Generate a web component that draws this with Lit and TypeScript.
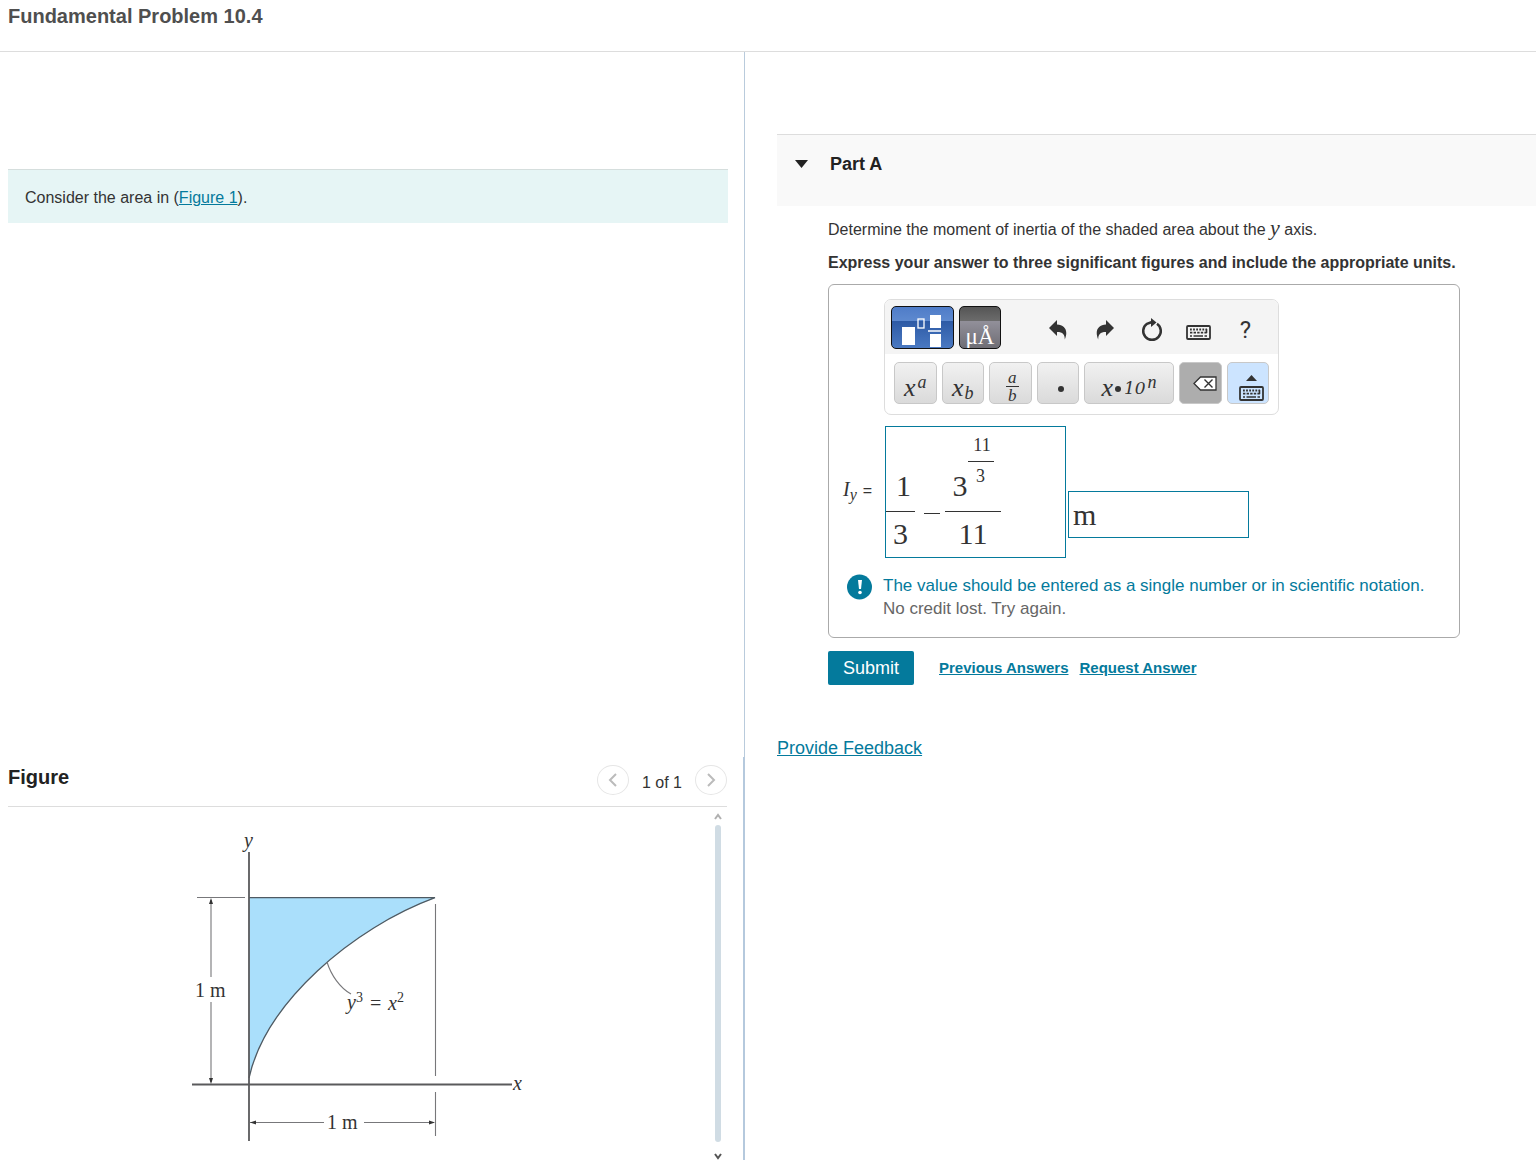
import { LitElement, html, css, svg } from "lit";
import { customElement, property } from "lit/decorators.js";

const keyboardShape = svg`
  <rect x="1" y="1" width="23" height="13" rx="1" fill="none" stroke="currentColor" stroke-width="1.8" />
  <path d="M4 4.5h17" fill="none" stroke="currentColor" stroke-width="1.8" stroke-dasharray="1.8 1.3" />
  <path d="M4 7.6h17" fill="none" stroke="currentColor" stroke-width="1.8" stroke-dasharray="2.4 1.2" />
  <path d="M4 11h2M7.5 11h9.5M18.5 11h2.5M20.5 4v4" fill="none" stroke="currentColor" stroke-width="1.6" />
`;

@customElement("math-toolbar")
export class MathToolbar extends LitElement {
  static styles = css`
    :host {
      display: block;
      box-sizing: border-box;
      width: 395px;
      max-width: 100%;
      border: 1px solid #ddd;
      border-radius: 7px;
      background: #fff;
      overflow: hidden;
      color: #333;
    }
    button {
      box-sizing: border-box;
      margin: 0;
      padding: 0;
      border: 0;
      background: none;
      color: inherit;
      font: inherit;
      cursor: pointer;
    }
    svg {
      display: block;
    }
    .top {
      display: flex;
      align-items: center;
      height: 54px;
      padding: 0 6px;
      background: #f4f4f4;
    }
    .tab {
      display: flex;
      height: 43px;
      border: 1px solid #111;
      border-radius: 5px;
      color: #fff;
      overflow: hidden;
    }
    .templates {
      width: 63px;
      background: linear-gradient(#4f7cc8 0, #5d89cf 33%, #2d5aa5 34%, #4a79c2 100%);
    }
    .symbols {
      width: 42px;
      margin-left: 5px;
      justify-content: center;
      align-items: flex-end;
      background: linear-gradient(#555 0, #6b6b6b 33%, #92909a 34%, #6f6e75 100%);
      font: 23px/22px "Liberation Serif", serif;
    }
    .tools {
      display: flex;
      margin-left: 33px;
    }
    .tool {
      display: flex;
      width: 47px;
      height: 43px;
      padding-top: 6px;
      align-items: center;
      justify-content: center;
    }
    .help {
      font: 24px/36px Roboto, sans-serif;
    }
    .keys {
      display: grid;
      grid-template-columns: repeat(4, 1fr) 90px repeat(2, 1fr);
      gap: 5px;
      padding: 8px 9px 10px;
    }
    .key {
      display: flex;
      height: 42px;
      align-items: center;
      justify-content: center;
      border: 1px solid #c8c8c8;
      border-radius: 5px;
      background: linear-gradient(#f1f1f1, #dadada);
      font: italic 26px/26px "Liberation Serif", serif;
    }
    .script {
      font-size: 18px;
      line-height: 18px;
    }
    .raised {
      align-self: flex-start;
      margin: 10px 0 0 2px;
    }
    .lowered {
      align-self: flex-end;
      margin: 0 0 1px 1px;
    }
    .variable {
      padding-top: 10px;
    }
    .ratio {
      display: grid;
      margin: 6px 0 0 4px;
      font-size: 17px;
      line-height: 17px;
    }
    .over {
      width: 13px;
      border-bottom: 1px solid #333;
      text-align: center;
    }
    .under {
      text-align: center;
    }
    .dot {
      width: 6px;
      height: 6px;
      border-radius: 50%;
      background: #333;
    }
    .solo {
      margin: 12px 0 0 7px;
    }
    .inner {
      margin: 12px 3px 0 2px;
    }
    .ten {
      padding-top: 10px;
      font: italic 17px/20px "DejaVu Serif", serif;
    }
    .erase {
      background: #adadad;
      padding-left: 10px;
    }
    .toggle {
      background: #cce4ff;
      padding: 9px 0 0 8px;
    }
  `;

  render() {
    return html`
      <div class="top">
        <button class="tab templates" aria-label="Templates">
          <svg width="61" height="41" viewBox="0 0 61 41">
            <path d="M10 20h13v18h-13zM38 8h11v13h-11zM38 27h11v13h-11z" fill="#fff" />
            <rect x="26" y="12" width="6" height="9" fill="none" stroke="#fff" stroke-width="1.3" />
            <path d="M36 24h13" stroke="#fff" stroke-width="1.4" />
          </svg>
        </button>
        <button class="tab symbols" aria-label="Symbols">μÅ</button>
        <div class="tools">
          <button class="tool" aria-label="Undo">
            <svg width="18" height="20" viewBox="0 0 18 20">
              <path d="M8 0v4.5c8 .5 11.500 6 7.800 15c0-5-1.800-7.500-7.800-7.500v4L0 8z" fill="currentColor" />
            </svg>
          </button>
          <button class="tool" aria-label="Redo">
            <svg width="18" height="20" viewBox="0 0 18 20">
              <path d="M10 0v4.5c-8 .5-11.500 6-7.800 15c0-5 1.800-7.500 7.800-7.500v4L18 8z" fill="currentColor" />
            </svg>
          </button>
          <button class="tool" aria-label="Reset">
            <svg width="22" height="24" viewBox="0 0 22 24">
              <path d="M16 5.800A8.800 8.800 0 1 1 6 5.800L11 4" fill="none" stroke="currentColor" stroke-width="2.500" />
              <path d="M10 0L15.500 4.500L10 9z" fill="currentColor" />
            </svg>
          </button>
          <button class="tool" aria-label="Keyboard shortcuts">
            <svg width="25" height="19" viewBox="0 -4 25 19">${keyboardShape}</svg>
          </button>
          <button class="tool help" aria-label="Help">?</button>
        </div>
      </div>
      <div class="keys">
        <button class="key" aria-label="Superscript">
          <span class="variable">x</span><span class="script raised">a</span>
        </button>
        <button class="key" aria-label="Subscript">
          <span class="variable">x</span><span class="script lowered">b</span>
        </button>
        <button class="key" aria-label="Fraction">
          <span class="ratio"><span class="over">a</span><span class="under">b</span></span>
        </button>
        <button class="key" aria-label="Multiply"><span class="dot solo"></span></button>
        <button class="key" aria-label="Scientific notation">
          <span class="variable">x</span><span class="dot inner"></span><span class="ten">10</span
          ><span class="script raised">n</span>
        </button>
        <button class="key erase" aria-label="Backspace">
          <svg width="24" height="15" viewBox="0 0 24 15">
            <path d="M1 7.500L7.500 1H23v13H7.500z" fill="#fff" stroke="#333" stroke-width="1.300" />
            <path d="M11.500 3.500l8 8M19.500 3.500l-8 8" stroke="#333" stroke-width="1.400" />
          </svg>
        </button>
        <button class="key toggle" aria-label="Show keyboard">
          <svg width="25" height="26" viewBox="0 -11 25 26">
            <path d="M7 -5L12.500 -11L18 -5z" fill="#333" />
            ${keyboardShape}
          </svg>
        </button>
      </div>
    `;
  }
}

@customElement("answer-field")
export class AnswerField extends LitElement {
  static styles = css`
    :host {
      display: flex;
      align-items: center;
      color: #333;
      font-family: "Liberation Serif", serif;
    }
    .name {
      display: flex;
      align-items: baseline;
      width: 42px;
      padding-bottom: 4px;
      font-size: 20px;
      line-height: 24px;
    }
    .letter {
      font-style: italic;
    }
    .index {
      align-self: flex-end;
      font-size: 16px;
      font-style: italic;
      line-height: 16px;
    }
    .equals {
      margin-left: 6px;
      font-family: "Liberation Sans", sans-serif;
      font-size: 16px;
    }
    .value {
      box-sizing: border-box;
      display: flex;
      align-items: flex-start;
      width: 181px;
      height: 132px;
      border: 1px solid #047a9c;
      font-size: 30px;
      line-height: 36px;
      outline: none;
    }
    .fraction {
      display: flex;
      flex-direction: column;
    }
    .numerator {
      display: flex;
      align-items: flex-end;
      justify-content: center;
      box-sizing: border-box;
      height: 85px;
      padding-bottom: 7px;
      border-bottom: 1px solid #333;
    }
    .denominator {
      padding-top: 4px;
      text-align: center;
    }
    .first {
      width: 29px;
    }
    .second {
      width: 56px;
    }
    .first .numerator {
      padding-left: 6px;
    }
    .minus {
      width: 16px;
      height: 1px;
      margin: 86px 5px 0 9px;
      background: #333;
    }
    .power {
      align-self: flex-start;
      width: 26px;
      padding-top: 8px;
      font-size: 18px;
      line-height: 20px;
      text-align: center;
    }
    .upper {
      padding-left: 3px;
      padding-bottom: 6px;
      border-bottom: 1px solid #333;
    }
    .lower {
      padding-top: 4px;
    }
    .unit {
      box-sizing: border-box;
      align-self: flex-end;
      width: 181px;
      height: 47px;
      margin: 0 0 20px 2px;
      padding: 0 4px;
      border: 1px solid #047a9c;
      border-radius: 0;
      background: #fff;
      color: #333;
      font: 30px "Liberation Serif", serif;
    }
  `;

  render() {
    return html`
      <span class="name" id="name"
        ><span class="letter">I</span><span class="index">y</span><span class="equals">=</span></span
      >
      <div class="value" role="textbox" tabindex="0" aria-labelledby="name">
        <div class="fraction first">
          <div class="numerator">1</div>
          <div class="denominator">3</div>
        </div>
        <div class="minus"></div>
        <div class="fraction second">
          <div class="numerator">
            3
            <div class="power">
              <div class="upper">11</div>
              <div class="lower">3</div>
            </div>
          </div>
          <div class="denominator">11</div>
        </div>
      </div>
      <input class="unit" type="text" aria-label="Units" value="m" />
    `;
  }
}

@customElement("area-figure")
export class AreaFigure extends LitElement {
  static styles = css`
    :host {
      display: block;
    }
    svg {
      display: block;
    }
    .axis {
      stroke: #5a5a5c;
      stroke-width: 1.8;
    }
    .guide {
      stroke: #77777a;
      stroke-width: 1.1;
      fill: none;
    }
    .edge {
      stroke: #4f5a62;
      stroke-width: 1.3;
      fill: none;
    }
    .shade {
      fill: #aadffb;
    }
    .tip {
      fill: #333;
    }
    text {
      fill: #333;
      font: 20px "Liberation Serif", serif;
    }
    .variable {
      font-style: italic;
    }
    .exponent {
      font-size: 14px;
      font-style: normal;
    }
  `;

  render() {
    return html`
      <svg width="360" height="330" viewBox="0 0 360 330" role="img" aria-label="Shaded area above the curve">
        <path class="shade" d="M69 78H255C173 108 86 182 69 258z" />
        <path class="edge" d="M69 77.700H255C173 108 86 182 69 258" />
        <path class="axis" d="M69 32V321M12 264.500H332" />
        <path class="guide" d="M17 77.500H65M31 80V157M31 182V262M255.500 84V256M255.500 272V316M70 302.500H144M184 302.500H254" />
        <path class="guide" d="M147 142C151 155 160 168 171 174" />
        <path class="tip" d="M31 78l2 6h-4zM31 264l2-6h-4zM70 302.500l6-2v4zM255 302.500l-6-2v4z" />
        <text class="variable" x="64" y="27">y</text>
        <text class="variable" x="333" y="270">x</text>
        <text x="15" y="177">1 m</text>
        <text x="147" y="309">1 m</text>
        <text class="variable" x="167" y="189">y<tspan class="exponent" dy="-7">3</tspan></text>
        <text x="190" y="190">=</text>
        <text class="variable" x="208" y="190">x<tspan class="exponent" dy="-8">2</tspan></text>
      </svg>
    `;
  }
}

@customElement("app-root")
export class AppRoot extends LitElement {
  @property() heading = "Fundamental Problem 10.4";

  static styles = css`
    :host {
      display: flex;
      flex-direction: column;
      min-height: 100vh;
      background: #fff;
      color: #333;
      font: 16px/24px "Liberation Sans", Arial, sans-serif;
    }
    h1,
    h2,
    p {
      margin: 0;
    }
    a {
      color: #047a9c;
    }
    button {
      box-sizing: border-box;
      margin: 0;
      padding: 0;
      cursor: pointer;
    }
    .header {
      padding: 4px 8px 23px;
      border-bottom: 1px solid #ddd;
    }
    .title {
      color: #4f4f4f;
      font-size: 20px;
      line-height: 24px;
    }
    .panes {
      display: grid;
      flex: 1;
      grid-template-columns: 745fr 791fr;
    }
    .left {
      display: flex;
      flex-direction: column;
      justify-content: space-between;
      background: linear-gradient(#b9cbdc, #b9cbdc) right / 1px 100% no-repeat;
    }
    .prompt {
      margin: 117px 17px 0 8px;
      padding: 16px 17px 13px;
      border-top: 1px solid #d5dedd;
      background: #e6f5f5;
    }
    .figure {
      padding: 8px 16px 0 8px;
      border-right: 2px solid #b5c9dd;
    }
    .bar {
      display: flex;
      align-items: center;
      justify-content: space-between;
      height: 41px;
      border-bottom: 1px solid #ddd;
    }
    .subtitle {
      padding-bottom: 17px;
      color: #222;
      font-size: 20px;
      line-height: 24px;
    }
    .pager {
      display: flex;
      gap: 13px;
      padding-bottom: 12px;
    }
    .count {
      padding-top: 6px;
    }
    .round {
      display: flex;
      width: 32px;
      height: 30px;
      align-items: center;
      justify-content: center;
      border: 1px solid #e6e6e6;
      border-radius: 50%;
      background: #fff;
    }
    .view {
      display: flex;
      justify-content: space-between;
      height: 353px;
    }
    .drawing {
      margin: 13px 0 0 172px;
    }
    .scroll {
      display: flex;
      flex-direction: column;
      align-items: center;
      width: 8px;
      margin-right: 5px;
    }
    .arrow {
      display: block;
      flex: none;
    }
    .thumb {
      flex: 1;
      width: 6px;
      border-radius: 3px;
      background: #d0dce4;
    }
    .part {
      display: flex;
      height: 71px;
      margin: 82px 0 12px 32px;
      border-top: 1px solid #ddd;
      background: #f9f9f9;
    }
    .fold {
      display: flex;
      align-items: center;
      height: 58px;
      padding-left: 18px;
      border: 0;
      background: none;
      color: #222;
      font: bold 18px/24px "Liberation Sans", Arial, sans-serif;
      gap: 22px;
    }
    .question {
      margin: 0 76px 0 83px;
    }
    .variable {
      font: italic 22px/20px "Liberation Serif", serif;
    }
    .hint {
      margin-top: 9px;
      font-weight: bold;
    }
    .answer {
      margin-top: 9px;
      padding: 14px 14px 17px;
      border: 1px solid #aaa;
      border-radius: 6px;
    }
    .palette {
      margin-left: 41px;
    }
    .entry {
      margin-top: 11px;
    }
    .message {
      display: flex;
      margin: 16px 0 0 4px;
      color: #666;
      font-size: 17px;
      line-height: 23px;
      gap: 11px;
    }
    .note {
      color: #047a9c;
    }
    .actions {
      display: flex;
      align-items: center;
      margin-top: 13px;
      font-weight: bold;
      font-size: 15px;
    }
    .submit {
      width: 86px;
      height: 34px;
      margin-right: 25px;
      border: 0;
      border-radius: 2px;
      background: #047a9c;
      color: #fff;
      font: 18px/24px "Liberation Sans", Arial, sans-serif;
    }
    .request {
      margin-left: 11px;
    }
    .feedback {
      margin: 51px 0 0 32px;
      font-size: 18px;
    }
  `;

  render() {
    return html`
      <header class="header"><h1 class="title">${this.heading}</h1></header>
      <main class="panes">
        <section class="left">
          <p class="prompt">Consider the area in (<a href="#figure">Figure 1</a>).</p>
          <section class="figure" id="figure">
            <div class="bar">
              <h2 class="subtitle">Figure</h2>
              <div class="pager">
                <button class="round" aria-label="Previous figure">
                  <svg width="10" height="14" viewBox="0 0 10 14">
                    <path d="M8 1L2 7l6 6" fill="none" stroke="#bbb" stroke-width="2" />
                  </svg>
                </button>
                <span class="count">1 of 1</span>
                <button class="round" aria-label="Next figure">
                  <svg width="10" height="14" viewBox="0 0 10 14">
                    <path d="M2 1l6 6l-6 6" fill="none" stroke="#bbb" stroke-width="2" />
                  </svg>
                </button>
              </div>
            </div>
            <div class="view">
              <area-figure class="drawing"></area-figure>
              <div class="scroll">
                <svg class="arrow" width="8" height="18" viewBox="0 0 8 18">
                  <path d="M1 12l3-4l3 4" fill="none" stroke="#b0b0b0" stroke-width="2" />
                </svg>
                <div class="thumb"></div>
                <svg class="arrow" width="8" height="18" viewBox="0 0 8 18">
                  <path d="M1 12l3 4l3-4" fill="none" stroke="#555" stroke-width="2" />
                </svg>
              </div>
            </div>
          </section>
        </section>
        <section class="right">
          <div class="part">
            <button class="fold" aria-expanded="true">
              <svg width="13" height="8" viewBox="0 0 13 8"><path d="M0 0h13L6.500 8z" fill="#222" /></svg>
              Part A
            </button>
          </div>
          <div class="question">
            <p>Determine the moment of inertia of the shaded area about the <span class="variable">y</span> axis.</p>
            <p class="hint">Express your answer to three significant figures and include the appropriate units.</p>
            <div class="answer">
              <math-toolbar class="palette"></math-toolbar>
              <answer-field class="entry"></answer-field>
              <div class="message">
                <svg width="25" height="26" viewBox="0 0 25 26">
                  <circle cx="12.500" cy="13" r="12.500" fill="#047a9c" />
                  <path d="M11 6h4l-1 9h-2z" fill="#fff" />
                  <circle cx="13" cy="18.500" r="1.800" fill="#fff" />
                </svg>
                <div>
                  <p class="note">The value should be entered as a single number or in scientific notation.</p>
                  <p>No credit lost. Try again.</p>
                </div>
              </div>
            </div>
            <div class="actions">
              <button class="submit">Submit</button>
              <a href="#previous">Previous Answers</a>
              <a class="request" href="#request">Request Answer</a>
            </div>
          </div>
          <p class="feedback"><a href="#feedback">Provide Feedback</a></p>
        </section>
      </main>
    `;
  }
}
